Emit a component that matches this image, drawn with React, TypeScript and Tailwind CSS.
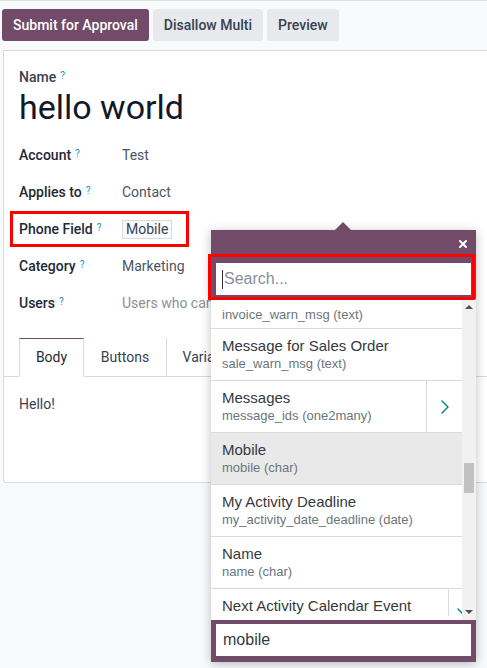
import { X, ChevronRight } from 'lucide-react'

const fields = [
  { label: 'Account', value: 'Test' },
  { label: 'Applies to', value: 'Contact' },
  { label: 'Phone Field', value: 'Mobile', boxed: true },
  { label: 'Category', value: 'Marketing' },
  { label: 'Users', value: 'Users who can use this template', muted: true },
]

const items = [
  { title: 'Message for Sales Order', sub: 'sale_warn_msg (text)' },
  { title: 'Messages', sub: 'message_ids (one2many)', relation: true },
  { title: 'Mobile', sub: 'mobile (char)', active: true },
  { title: 'My Activity Deadline', sub: 'my_activity_date_deadline (date)' },
  { title: 'Name', sub: 'name (char)' },
  { title: 'Next Activity Calendar Event', sub: 'activity_calendar_event_id (many2one)', relation: true },
]

function Help() {
  return <sup className="ml-[4px] text-[10px] font-normal text-[#1790c8] relative -top-[3px]">?</sup>
}

export default function App() {
  return (
    <div className="relative h-[668px] w-[487px] overflow-hidden border-t border-[#dcdee2] bg-[#f9fafb] font-['Roboto',sans-serif] text-[#212529]">
      <div className="flex gap-[4px] pl-[2px] pt-[8px]">
        <button className="h-[32px] rounded-[3px] bg-[#714b67] px-[11px] text-[14px] font-medium text-white">Submit for Approval</button>
        <button className="h-[32px] rounded-[3px] bg-[#e7e9ed] px-[11px] text-[14px] font-medium text-[#374151]">Disallow Multi</button>
        <button className="h-[32px] rounded-[3px] bg-[#e7e9ed] px-[11px] text-[14px] font-medium text-[#374151]">Preview</button>
      </div>

      <div className="ml-[3px] mt-[9px] h-[433px] rounded-bl-[3px] border-b border-l border-t border-[#d8dadd] bg-white">
        <div className="px-[15px] pt-[16px]">
          <div className="text-[14px] font-medium leading-[20px] text-[#374151]">Name<Help /></div>
          <div className="text-[34px] leading-[40px] text-[#111827]">hello world</div>

          <div className="mt-[10px] flex flex-col">
            {fields.map((f) => (
              <div key={f.label} className="flex h-[37px] items-center">
                <div className="w-[103px] text-[14px] font-medium text-[#1f2937]">{f.label}<Help /></div>
                {f.boxed ? (
                  <span className="border border-[#d8dadd] bg-[#f9fafb] px-[3px] text-[14px] leading-[17px] text-[#374151]">{f.value}</span>
                ) : (
                  <span className={`whitespace-nowrap text-[14px] ${f.muted ? 'text-[#8a8f98]' : 'text-[#4b5563]'}`}>{f.value}</span>
                )}
              </div>
            ))}
          </div>
        </div>

        <div className="mt-[16px] flex border-b border-[#d8dadd] pl-[15px]">
          <div className="-mb-px flex h-[39px] w-[65px] items-center justify-center border-x border-b border-t border-x-[#d8dadd] border-b-white border-t-[#714b67] bg-white text-[14px] text-[#1f2937]">Body</div>
          <div className="flex h-[38px] w-[83px] items-center justify-center border-r border-[#d8dadd] text-[14px] text-[#374151]">Buttons</div>
          <div className="flex h-[38px] w-[90px] items-center justify-center border-r border-[#d8dadd] text-[14px] text-[#374151]">Variables</div>
        </div>
        <div className="px-[15px] pt-[17px] text-[14px] text-[#374151]">Hello!</div>
      </div>

      {/* field selector popover */}
      <div className="absolute left-[211px] top-[229px] w-[265px] shadow-[0_2px_10px_rgba(0,0,0,0.25)] font-['Liberation_Sans',Arial,sans-serif]">
        <div className="absolute -top-[8px] left-[124px] h-0 w-0 border-x-[8px] border-b-[8px] border-x-transparent border-b-[#714b67]" />
        <div className="bg-[#714b67] px-[5px] pb-[4px] pt-[8px]">
          <div className="flex justify-end pr-[2px]">
            <X size={12} strokeWidth={4} className="text-white" />
          </div>
          <div className="mt-[13px] flex h-[32px] items-center bg-white px-[6px] text-[16px] text-[#8a8f98]">
            <span className="mr-px h-[19px] w-px bg-[#333]" />Search...
          </div>
        </div>

        <div className="flex h-[321px] bg-white">
          <div className="h-[317px] flex-1 overflow-hidden">
            <div className="flex h-[30px] items-center border-b border-[#dcdcdc] pl-[11px] pt-[3px] text-[13px] text-[#6c757d]">invoice_warn_msg (text)</div>
            {items.map((it) => (
              <div key={it.title} className={`flex h-[52px] border-b border-[#dcdcdc] ${it.active ? 'bg-[#e9e9e9]' : ''}`}>
                <div className="flex flex-1 flex-col justify-center pl-[11px]">
                  <div className="whitespace-nowrap text-[15px] leading-[19px] text-[#343a40]">{it.title}</div>
                  <div className="whitespace-nowrap text-[13px] leading-[18px] text-[#6c757d]">{it.sub}</div>
                </div>
                {it.relation && (
                  <div className="flex w-[36px] items-center justify-center border-l border-[#dcdcdc]">
                    <ChevronRight size={24} strokeWidth={1.4} className="text-[#017e84]" />
                  </div>
                )}
              </div>
            ))}
          </div>
          <div className="relative w-[14px] bg-[#f1f1f1]">
            <div className="absolute left-[3px] top-[6px] h-0 w-0 border-x-[4px] border-b-[4px] border-x-transparent border-b-[#505050]" />
            <div className="absolute left-[2px] top-[164px] h-[30px] w-[10px] bg-[#c1c1c1]" />
            <div className="absolute bottom-[6px] left-[3px] h-0 w-0 border-x-[4px] border-t-[4px] border-x-transparent border-t-[#505050]" />
          </div>
        </div>

        <div className="bg-[#714b67] px-[5px] pb-[6px] pt-[4px]">
          <div className="flex h-[32px] items-center bg-white px-[7px] text-[16px] text-[#343a40]">mobile</div>
        </div>
      </div>

      {/* annotation boxes */}
      <div className="pointer-events-none absolute left-[10px] top-[210px] h-[36px] w-[179px] border-[3px] border-[#ff0000]" />
      <div className="pointer-events-none absolute left-[208px] top-[253px] h-[46px] w-[267px] border-[3px] border-[#ff0000]" />
    </div>
  )
}
